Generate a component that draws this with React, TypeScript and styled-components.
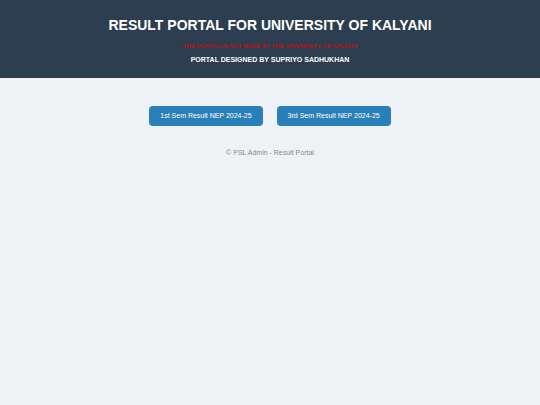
import React from "react";
import styled, { createGlobalStyle } from "styled-components";

const GlobalStyle = createGlobalStyle`
  body {
    margin: 0;
    background: #eef2f5;
    font-family: "Liberation Sans", Arial, sans-serif;
    text-align: center;
  }
`;

const Header = styled.header`
  padding: 17px 16px 14px;
  background: #2c3e50;
  color: #ffffff;
`;

const Title = styled.h1`
  margin: 0 0 9px;
  font-size: 14px;
  line-height: 16px;
`;

const Notice = styled.p`
  margin: 0 0 6px;
  color: #e00000;
  font-size: 6px;
  line-height: 8px;
`;

const Credit = styled.p`
  margin: 0;
  font-size: 7px;
  font-weight: bold;
  line-height: 8px;
`;

const Results = styled.main`
  display: flex;
  flex-wrap: wrap;
  justify-content: center;
  gap: 14px;
  padding: 28px 16px 23px;
`;

const ResultButton = styled.button`
  padding: 6px 11px;
  border: 0;
  border-radius: 4px;
  background: #2980b9;
  color: #ffffff;
  font-family: inherit;
  font-size: 7px;
  line-height: 8px;
  cursor: pointer;
`;

const Footer = styled.footer`
  color: #888888;
  font-size: 7px;
  line-height: 8px;
`;

const sessions = ["1st Sem Result NEP 2024-25", "3rd Sem Result NEP 2024-25"];

export default function App() {
  return (
    <>
      <GlobalStyle />
      <Header>
        <Title>RESULT PORTAL FOR UNIVERSITY OF KALYANI</Title>
        <Notice>THE PORTAL IS NOT MADE BY THE UNIVERSITY OF KALYANI</Notice>
        <Credit>PORTAL DESIGNED BY SUPRIYO SADHUKHAN</Credit>
      </Header>
      <Results>
        {sessions.map((session) => (
          <ResultButton key={session} type="button">{session}</ResultButton>
        ))}
      </Results>
      <Footer>© PSL Admin - Result Portal</Footer>
    </>
  );
}
